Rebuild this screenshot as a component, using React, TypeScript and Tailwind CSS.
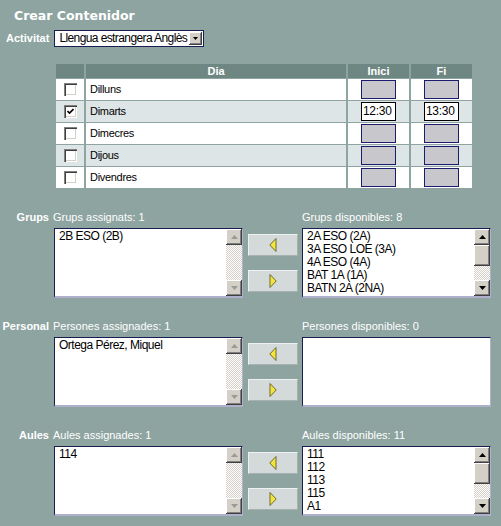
import React from "react";

// classic win-style raised bevel used by scrollbar parts and the select button
const raised =
  "bg-[#d4d0c8] shadow-[inset_-1px_-1px_#404040,inset_1px_1px_#ffffff,inset_-2px_-2px_#808080]";

const days = [
  { name: "Dilluns", checked: false },
  { name: "Dimarts", checked: true, start: "12:30", end: "13:30" },
  { name: "Dimecres", checked: false },
  { name: "Dijous", checked: false },
  { name: "Divendres", checked: false },
];

interface Section {
  label: string;
  assignedTitle: string;
  assigned: string[];
  availableTitle: string;
  available: string[];
}

const sections: Section[] = [
  {
    label: "Grups",
    assignedTitle: "Grups assignats: 1",
    assigned: ["2B ESO (2B)"],
    availableTitle: "Grups disponibles: 8",
    available: ["2A ESO (2A)", "3A ESO LOE (3A)", "4A ESO (4A)", "BAT 1A (1A)", "BATN 2A (2NA)"],
  },
  {
    label: "Personal",
    assignedTitle: "Persones assignades: 1",
    assigned: ["Ortega Pérez, Miquel"],
    availableTitle: "Persones disponibles: 0",
    available: [],
  },
  {
    label: "Aules",
    assignedTitle: "Aules assignades: 1",
    assigned: ["114"],
    availableTitle: "Aules disponibles: 11",
    available: ["111", "112", "113", "115", "A1"],
  },
];

function ScrollArrow({ dir, disabled }: { dir: "up" | "down"; disabled?: boolean }) {
  return (
    <div className={`w-[16px] h-[16px] shrink-0 flex items-center justify-center ${raised}`}>
      <svg width="7" height="4" viewBox="0 0 7 4">
        <path
          d={dir === "up" ? "M3.5 0L7 4H0Z" : "M0 0H7L3.5 4Z"}
          fill={disabled ? "#9a9a9a" : "#000"}
        />
      </svg>
    </div>
  );
}

function ScrollBar({ active }: { active: boolean }) {
  return (
    <div className="w-[16px] h-full flex flex-col">
      <ScrollArrow dir="up" disabled={!active} />
      {active && <div className={`h-[21px] shrink-0 ${raised}`} />}
      <div className="flex-1 bg-[repeating-conic-gradient(#d4d0c8_0%_25%,#ffffff_0%_50%)] bg-size-[2px_2px]" />
      <ScrollArrow dir="down" disabled={!active} />
    </div>
  );
}

function ListBox({ items, scroll, active }: { items: string[]; scroll: boolean; active: boolean }) {
  return (
    <div className="w-[189px] h-[70px] bg-white border-t border-l border-b-2 border-r border-t-[#1a1d4f] border-l-[#1a1d4f] border-b-[#aeb0cc] border-r-[#aeb0cc] flex">
      <div className="flex-1 overflow-hidden pl-[4px] pt-[1px] text-[12px] leading-[13px] tracking-[-0.5px] text-black">
        {items.map((it) => (
          <div key={it} className="whitespace-nowrap">
            {it}
          </div>
        ))}
      </div>
      {scroll && <ScrollBar active={active} />}
    </div>
  );
}

function ArrowButton({ dir }: { dir: "left" | "right" }) {
  return (
    <button className="w-[50px] h-[22px] bg-[#d4d9d9] border border-t-[#eef1f1] border-l-[#eef1f1] border-b-[#a7b2b0] border-r-[#a7b2b0] flex items-center justify-center">
      <svg width="8" height="14" viewBox="0 0 8 14">
        <path
          d={dir === "left" ? "M7 0.5L0.8 7L7 13.5Z" : "M1 0.5L7.2 7L1 13.5Z"}
          fill="#f4e43c"
          stroke="#6a6a34"
          strokeWidth="1"
        />
      </svg>
    </button>
  );
}

function Checkbox({ checked }: { checked: boolean }) {
  return (
    <span className="w-[13px] h-[13px] bg-white flex items-center justify-center shadow-[inset_1px_1px_#808080,inset_2px_2px_#404040,inset_-1px_-1px_#ffffff,inset_-2px_-2px_#d4d0c8]">
      {checked && (
        <svg width="7" height="7" viewBox="0 0 7 7">
          <path d="M0.5 3L2.5 5L6.5 1" fill="none" stroke="#000" strokeWidth="1.6" />
        </svg>
      )}
    </span>
  );
}

function TimeBox({ value }: { value?: string }) {
  if (value) {
    return (
      <div className="w-[35px] h-[19px] mt-[1px] border border-black bg-white pl-[1px] text-[12px] leading-[17px] tracking-[-0.3px] text-black">
        {value}
      </div>
    );
  }
  return <div className="w-[35px] h-[19px] mt-[1px] border border-[#1c1c6e] bg-[#c8c8cc]" />;
}

export default function App() {
  return (
    <div className="w-[501px] h-[526px] overflow-hidden bg-[#8ea4a0] font-['Liberation_Sans',Arial,sans-serif] text-[11px] text-white">
      <h1 className="mt-[9px] pl-[14px] font-['DejaVu_Sans',Verdana,sans-serif] text-[12.5px] font-bold leading-[14px]">
        Crear Contenidor
      </h1>

      <div className="mt-[7px] pl-[6px] flex items-center gap-[5px]">
        <span className="font-bold">Activitat</span>
        <div className="w-[150px] h-[17px] border border-[#1a1d4f] bg-white flex items-center">
          <span className="flex-1 overflow-hidden whitespace-nowrap pl-[4px] text-[12px] leading-[15px] tracking-[-0.6px] text-black">
            Llengua estrangera Anglès
          </span>
          <div className={`w-[13px] h-[13px] mr-[1px] flex items-center justify-center ${raised}`}>
            <svg width="5" height="3" viewBox="0 0 5 3">
              <path d="M0 0H5L2.5 3Z" fill="#000" />
            </svg>
          </div>
        </div>
      </div>

      <div className="ml-[56px] mt-[17px] w-[416px] grid grid-cols-[28px_260px_61px_61px] gap-x-[2px] gap-y-[1px]">
        <div className="h-[14px] bg-[#6f8783]" />
        {["Dia", "Inici", "Fi"].map((h) => (
          <div key={h} className="h-[14px] bg-[#6f8783] text-center font-bold leading-[14px]">
            {h}
          </div>
        ))}
        {days.map((d, i) => {
          const bg = i % 2 === 1 ? "bg-[#dde5e6]" : "bg-white";
          return (
            <React.Fragment key={d.name}>
              <div className={`h-[21px] ${bg} flex items-center justify-center`}>
                <Checkbox checked={d.checked} />
              </div>
              <div className={`h-[21px] ${bg} pl-[4px] flex items-center text-black tracking-[-0.3px]`}>
                {d.name}
              </div>
              <div className={`h-[21px] ${bg} flex justify-center`}>
                <TimeBox value={d.start} />
              </div>
              <div className={`h-[21px] ${bg} flex justify-center`}>
                <TimeBox value={d.end} />
              </div>
            </React.Fragment>
          );
        })}
      </div>

      {sections.map((s, idx) => (
        <section key={s.label} className={`flex ${idx === 0 ? "mt-[23px]" : "mt-[22px]"}`}>
          <div className="w-[53px] pr-[4px] text-right font-bold leading-[13px]">{s.label}</div>
          <div className="flex flex-col">
            <div className="flex leading-[13px]">
              <span className="w-[249px]">{s.assignedTitle}</span>
              <span>{s.availableTitle}</span>
            </div>
            <div className="mt-[4px] ml-[1px] flex">
              <ListBox items={s.assigned} scroll active={false} />
              <div className="w-[59px] pl-[5px] pt-[6px] flex flex-col gap-[14px]">
                <ArrowButton dir="left" />
                <ArrowButton dir="right" />
              </div>
              <ListBox items={s.available} scroll={s.available.length > 0} active />
            </div>
          </div>
        </section>
      ))}
    </div>
  );
}
